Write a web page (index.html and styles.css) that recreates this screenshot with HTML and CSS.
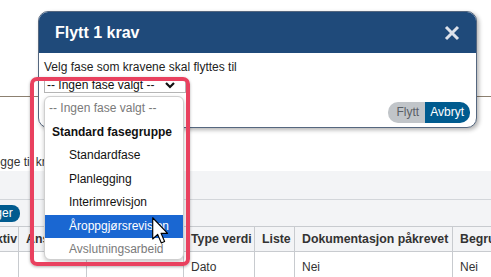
FILE: index.html
```html
<!DOCTYPE html>
<html lang="no">
<head>
  <meta charset="UTF-8" />
  <meta name="viewport" content="width=device-width, initial-scale=1.0"/>
  <title>Flytt krav</title>
  <link rel="stylesheet" href="styles.css">
</head>
<body>
  <div class="topbar"></div>

  <div class="add-row">Legge til krav</div>

  <div class="toolbar">
    <div class="toolbar-top"></div>
    <div class="toolbar-bottom">
      <button class="pill-btn">Innstillinger</button>
    </div>
  </div>

  <table class="req-table">
    <colgroup>
      <col style="width: 39px">
      <col style="width: 68px">
      <col style="width: 97px">
      <col style="width: 71px">
      <col style="width: 40px">
      <col style="width: 158px">
      <col style="width: 100px">
    </colgroup>
    <thead>
      <tr>
        <th>Aktiv</th>
        <th>Ansvarlig</th>
        <th>Kravtype</th>
        <th>Type verdi</th>
        <th>Liste</th>
        <th>Dokumentasjon påkrevet</th>
        <th>Begrunnelse</th>
      </tr>
    </thead>
    <tbody>
      <tr>
        <td></td>
        <td></td>
        <td></td>
        <td>Dato</td>
        <td></td>
        <td>Nei</td>
        <td>Nei</td>
      </tr>
    </tbody>
  </table>

  <!-- dialog -->
  <div class="dialog">
    <div class="dialog-header">
      <span class="dialog-title">Flytt 1 krav</span>
      <svg class="close-icon" width="16" height="16" viewBox="0 0 16 16">
        <path d="M2 2 L14 14 M14 2 L2 14" stroke="#dde2ea" stroke-width="3" fill="none"/>
      </svg>
    </div>
    <div class="dialog-body">
      <div class="dialog-text">Velg fase som kravene skal flyttes til</div>
      <div class="fake-select">
        <span>-- Ingen fase valgt --</span>
        <svg width="10" height="7" viewBox="0 0 10 7">
          <path d="M1 1 L5 5 L9 1" stroke="#111" stroke-width="2.2" fill="none"/>
        </svg>
      </div>
      <div class="dialog-actions">
        <button class="btn btn-move">Flytt</button>
        <button class="btn btn-cancel">Avbryt</button>
      </div>
    </div>
  </div>

  <!-- open select list -->
  <div class="dropdown">
    <div class="opt opt-muted">-- Ingen fase valgt --</div>
    <div class="opt opt-group">Standard fasegruppe</div>
    <div class="opt opt-child">Standardfase</div>
    <div class="opt opt-child">Planlegging</div>
    <div class="opt opt-child">Interimrevisjon</div>
    <div class="opt opt-child opt-active">Åroppgjørsrevisjon</div>
    <div class="opt opt-child opt-muted">Avslutningsarbeid</div>
  </div>

  <div class="highlight-box"></div>

  <svg class="cursor" width="17" height="27" viewBox="0 0 12 19">
    <path d="M0.5 0.5 L0.5 15.5 L4 12.3 L6.6 18.3 L8.9 17.3 L6.4 11.5 L11 11.5 Z" fill="#fff" stroke="#000" stroke-width="0.8" stroke-linejoin="round"/>
  </svg>
</body>
</html>
```

FILE: styles.css
```css
body {
  font-family: "Liberation Sans", Arial, sans-serif;
  font-size: 12px;
  color: #333;
  background-color: #fff;
  margin: 0;
  overflow: hidden;
  width: 491px;
  height: 277px;
}

.topbar {
  height: 96px;
  border-bottom: 1px solid #8c8070;
}

.add-row {
  margin-top: 58px;
  margin-left: -13px;
  height: 16px;
  line-height: 14px;
  white-space: nowrap;
}

.toolbar {
  background-color: #f3f4f6;
}

.toolbar-top {
  height: 28px;
  border-bottom: 1px solid #d3d6da;
}

.toolbar-bottom {
  height: 26px;
  display: flex;
  align-items: center;
}

.pill-btn {
  margin-left: -55px;
  height: 17px;
  padding: 0 7px;
  border: none;
  border-radius: 8px;
  background-color: #005b8f;
  color: #fff;
  font-family: inherit;
  font-size: 12px;
  line-height: 17px;
}

.req-table {
  margin-left: -21px;
  border-collapse: collapse;
  table-layout: fixed;
  width: 573px;
}

.req-table th,
.req-table td {
  border: 1px solid #c8cbcf;
  padding: 0 7px;
  text-align: left;
  white-space: nowrap;
  overflow: hidden;
}

.req-table th {
  height: 24px;
  background-color: #f3f4f6;
  font-weight: bold;
  font-size: 12.3px;
}

.req-table td {
  height: 29px;
}

.dialog {
  position: absolute;
  left: 38px;
  top: 11px;
  width: 439px;
  height: 117px;
  box-sizing: border-box;
  border: 1px solid #55677f;
  border-radius: 10px;
  background-color: #fff;
  overflow: hidden;
  box-shadow: 2px 2px 4px rgba(0, 0, 0, 0.3);
}

.dialog-header {
  height: 41px;
  background-color: #1f4a7a;
  display: flex;
  align-items: center;
  justify-content: space-between;
  padding: 0 16px;
}

.dialog-title {
  color: #fff;
  font-weight: bold;
  font-size: 16px;
}

.dialog-body {
  padding: 7px 6px 0 5px;
}

.dialog-text {
  line-height: 14px;
  color: #222;
}

.fake-select {
  margin-top: 4px;
  width: 142px;
  height: 15px;
  box-sizing: border-box;
  border: 1px solid #b5b5b5;
  border-top-color: #c8c8c8;
  display: flex;
  align-items: center;
  justify-content: space-between;
  padding: 0 10px 0 2px;
  color: #111;
  line-height: 13px;
}

.dialog-actions {
  margin-top: 9px;
  display: flex;
  justify-content: flex-end;
}

.btn {
  height: 21px;
  border: none;
  font-family: inherit;
  font-size: 12px;
  line-height: 21px;
}

.btn-move {
  padding: 0 6px 0 9px;
  background-color: #c1c5c9;
  color: #5a5f66;
  border-radius: 10px 0 0 10px;
}

.btn-cancel {
  padding: 0 6px 0 5px;
  background-color: #005b8f;
  color: #fff;
  border-radius: 0 10px 10px 0;
}

.dropdown {
  position: absolute;
  left: 44px;
  top: 96px;
  width: 140px;
  height: 164px;
  box-sizing: border-box;
  border: 1px solid #cfcfcf;
  border-radius: 6px;
  background-color: #fff;
  box-shadow: 0 2px 4px rgba(0, 0, 0, 0.22);
  overflow: hidden;
}

.opt {
  height: 23.5px;
  line-height: 23.5px;
  padding-left: 4px;
  color: #111;
  white-space: nowrap;
}

.opt-group {
  padding-left: 7px;
  font-weight: bold;
}

.opt-child {
  padding-left: 24px;
}

.opt-muted {
  color: #7a7a7a;
}

.opt-active {
  background-color: #1a67d2;
  color: #fff;
}

.highlight-box {
  position: absolute;
  left: 30px;
  top: 77px;
  width: 160px;
  height: 189px;
  box-sizing: border-box;
  border: 4px solid #e9415f;
  border-radius: 7px;
  box-shadow: 0 1px 3px rgba(0, 0, 0, 0.3);
}

.cursor {
  position: absolute;
  left: 152px;
  top: 217px;
}
```
